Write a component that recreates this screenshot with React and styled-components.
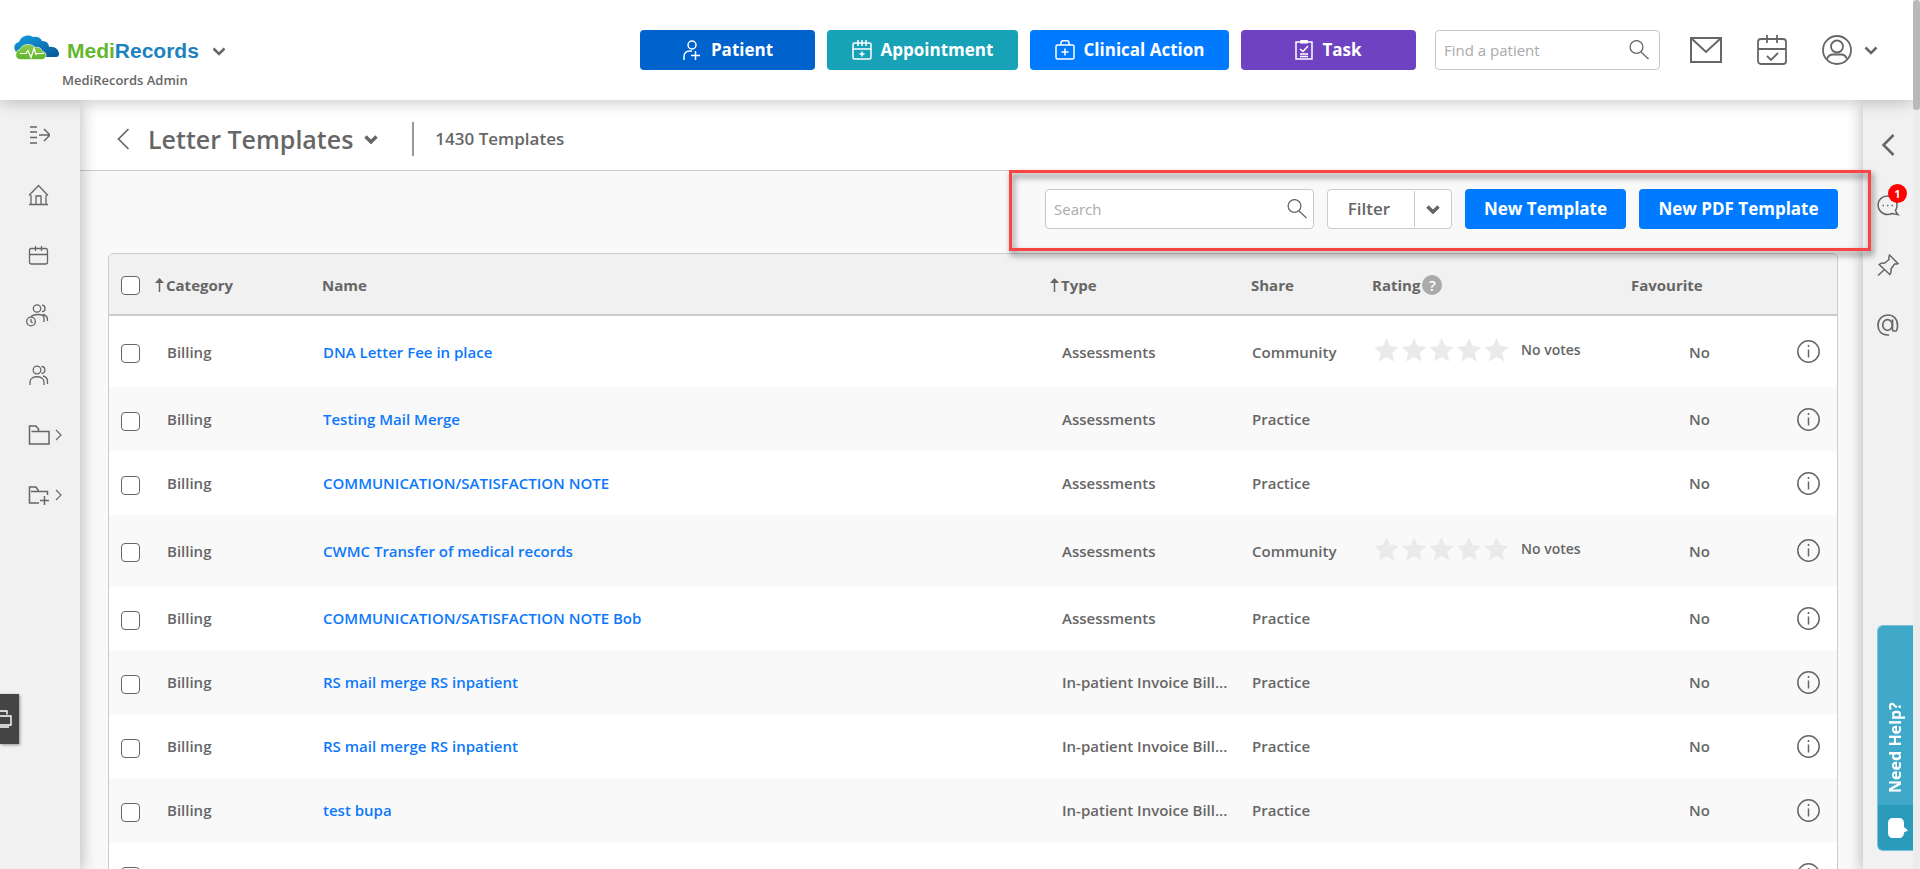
import React from "react";
import styled, { createGlobalStyle } from "styled-components";

const Global = createGlobalStyle`
  *, *::before, *::after { box-sizing: border-box; }
  body { margin: 0; background: #f9f9f9; color: #666; font: 600 15px/20px "Open Sans", "Noto Sans", sans-serif; }
  button, input { font: inherit; color: inherit; margin: 0; }
  button { border: 0; padding: 0; background: none; cursor: pointer; }
  a { color: inherit; text-decoration: none; }
  svg { display: block; flex: none; }
`;

const Page = styled.div`
  display: flex;
  flex-direction: column;
  height: 100vh;
  padding-right: 7px;
  overflow: hidden;
`;

const Header = styled.header`
  position: relative;
  z-index: 20;
  display: flex;
  align-items: center;
  flex: none;
  height: 100px;
  padding: 0 35px 0 14px;
  background: #fff;
  box-shadow: 0 1px 16px rgba(0, 0, 0, 0.25);
`;
const Brand = styled.div`
  display: flex;
  flex-direction: column;
  gap: 2px;
  margin-right: auto;
  padding-top: 24px;
`;
const BrandButton = styled.button`
  display: flex;
  align-items: center;
  gap: 8px;
`;
const Wordmark = styled.span`
  margin-right: 5px;
  color: #1c82bd;
  font: 700 21px/28px "Liberation Sans", Arial, sans-serif;
  span { color: #64b62d; }
`;
const Account = styled.span`
  padding-left: 48px;
  font-size: 13px;
  line-height: 20px;
`;
const Actions = styled.nav`
  display: flex;
  gap: 12px;
  margin-right: 19px;
`;
const Button = styled.button`
  display: flex;
  align-items: center;
  justify-content: center;
  gap: 9px;
  width: ${(p) => p.$w}px;
  height: 40px;
  border-radius: 4px;
  background: ${(p) => p.$bg || "#007bff"};
  color: #fff;
  font-size: 17px;
  font-weight: 700;
`;
const SearchBox = styled.label`
  display: flex;
  align-items: center;
  width: ${(p) => p.$w}px;
  height: 40px;
  padding: 0 ${(p) => p.$end}px 0 8px;
  border: 1px solid #c8c8c8;
  border-radius: 4px;
  background: #fff;
  input {
    flex: 1;
    min-width: 0;
    border: 0;
    padding: 0;
    outline: 0;
    background: none;
    font-size: 15px;
    font-weight: 400;
  }
  input::placeholder { color: #aaa; opacity: 1; }
`;
const HeaderIcons = styled.div`
  display: flex;
  align-items: center;
  gap: 35px;
  margin-left: 30px;
  button { display: flex; align-items: center; gap: 12px; }
`;

const Body = styled.div`
  display: flex;
  flex: 1;
  min-height: 0;
`;
const SideNav = styled.nav`
  position: relative;
  z-index: 10;
  flex: none;
  width: 80px;
  padding-top: 5px;
  background: #f1f1f1;
  box-shadow: 0 4px 16px rgba(0, 0, 0, 0.3);
`;
const NavItem = styled.a`
  display: flex;
  align-items: center;
  gap: 5px;
  height: 60px;
  padding-left: 26px;
`;
const Rail = styled.aside`
  position: relative;
  z-index: 10;
  flex: none;
  display: flex;
  flex-direction: column;
  width: 50px;
  padding: 15px 0 0 13px;
  background: #f1f1f1;
  box-shadow: 0 4px 16px rgba(0, 0, 0, 0.3);
`;
const RailButton = styled.button`
  position: relative;
  display: flex;
  align-items: center;
  justify-content: center;
  width: 24px;
  height: 60px;
`;
const Badge = styled.span`
  position: absolute;
  top: 9px;
  right: -7px;
  width: 19px;
  height: 19px;
  border-radius: 50%;
  background: #f00;
  color: #fff;
  font-size: 11px;
  line-height: 19px;
  font-weight: 700;
  text-align: center;
`;

const Main = styled.main`
  flex: 1;
  min-width: 0;
`;
const TitleBar = styled.div`
  display: flex;
  align-items: center;
  height: 71px;
  padding: 8px 0 0 36px;
  border-bottom: 1px solid #ccc;
  background: #fff;
`;
const Title = styled.h1`
  margin: 0 0 0 18px;
  font-size: 25px;
  line-height: 36px;
  font-weight: 600;
`;
const TitleMenu = styled.button`
  margin-left: 11px;
`;
const Count = styled.span`
  margin-left: 34px;
  padding-left: 21px;
  border-left: 2px solid #999;
  font-size: 17px;
  line-height: 34px;
`;
const Toolbar = styled.div`
  display: flex;
  justify-content: flex-end;
  padding: 18px 25px 24px;
`;
const Controls = styled.div`
  position: relative;
  display: flex;
  gap: 13px;
`;
const Highlight = styled.div`
  position: absolute;
  z-index: 30;
  inset: -19px -33px -22px -36px;
  border: 3px solid #fa4343;
  filter: drop-shadow(2px 4px 3px rgba(0, 0, 0, 0.55));
  pointer-events: none;
`;
const Filter = styled.div`
  display: flex;
  align-items: center;
  width: 125px;
  height: 40px;
  border: 1px solid #ccc;
  border-radius: 4px;
  background: #fff;
  font-size: 17px;
  button:first-child { flex: 1; height: 36px; padding-right: 4px; border-right: 1px solid #ccc; }
  button:last-child { display: flex; justify-content: center; width: 36px; }
`;

const TableFrame = styled.div`
  margin: 0 25px 0 28px;
  border: 1px solid #ccc;
  border-radius: 5px 5px 0 0;
  overflow: hidden;
`;
const Table = styled.table`
  width: 100%;
  border-spacing: 0;
  table-layout: fixed;
`;
const Th = styled.th`
  width: ${(p) => (p.$w ? p.$w + "px" : "auto")};
  height: 62px;
  padding: 2px 0 0 ${(p) => (p.$sorted ? 0 : p.$check ? 12 : 11)}px;
  border-bottom: 2px solid #ccc;
  background: #f1f1f1;
  font-weight: 700;
  text-align: left;
  white-space: nowrap;
`;
const HeadLabel = styled.span`
  display: flex;
  align-items: center;
  gap: 2px;
`;
const Help = styled.span`
  width: 20px;
  height: 20px;
  border-radius: 50%;
  background: #aaa;
  color: #fff;
  font-size: 15px;
  font-weight: 600;
  text-align: center;
`;
const Row = styled.tr`
  height: ${(p) => (p.$rated ? 71 : 64)}px;
  background: ${(p) => (p.$alt ? "#f9f9f9" : "#fff")};
`;
const Td = styled.td`
  padding: 0 0 0 12px;
  text-align: ${(p) => p.$align || "left"};
  white-space: nowrap;
  svg { display: inline-block; vertical-align: middle; }
`;
const Check = styled.input`
  appearance: none;
  display: block;
  width: 19px;
  height: 19px;
  border: 1px solid #666;
  border-radius: 4px;
  background: #fff;
  td & { position: relative; top: 2px; }
`;
const NameLink = styled.a`
  color: #0d78fb;
`;
const Rating = styled.span`
  display: flex;
  align-items: center;
  gap: 11px;
  padding: 0 0 4px 1px;
  font-size: 14px;
`;

const HelpTab = styled.a`
  position: fixed;
  z-index: 30;
  right: 7px;
  bottom: 18px;
  display: flex;
  flex-direction: column;
  width: 36px;
  height: 226px;
  border: 1px solid #7cc3d8;
  border-right: 0;
  border-radius: 6px 0 0 6px;
  background: #40a9c9;
  overflow: hidden;
`;
const HelpText = styled.span`
  flex: 1;
  padding-top: 12px;
  color: #fff;
  font: 700 16px/34px "Noto Sans", sans-serif;
  writing-mode: vertical-rl;
  transform: rotate(180deg);
`;
const HelpChat = styled.span`
  display: flex;
  align-items: center;
  justify-content: center;
  height: 45px;
  padding-left: 4px;
  background: #2b9bbb;
`;
const PrintTab = styled.button`
  position: fixed;
  z-index: 30;
  left: 0;
  bottom: 125px;
  width: 19px;
  height: 50px;
  background: #444;
  box-shadow: 1px 1px 3px rgba(0, 0, 0, 0.4);
`;
const ScrollTrack = styled.div`
  position: fixed;
  z-index: 40;
  top: 0;
  right: 0;
  bottom: 0;
  width: 7px;
  background: #ececec;
`;
const ScrollThumb = styled.div`
  height: 110px;
  border-radius: 4px;
  background: #b9b9b9;
`;

const Icon = ({ w = 24, h = w, sw = 1.5, color = "currentColor", vb, children }) => (
  <svg width={w} height={h} viewBox={vb || `0 0 ${w} ${h}`} fill="none" stroke={color} strokeWidth={sw} aria-hidden="true">
    {children}
  </svg>
);

const Chevron = ({ sw = 3 }) => (
  <Icon w={14} h={9} sw={sw}><path d="M1.5 1.5 7 7l5.5-5.5" /></Icon>
);
const Magnifier = () => (
  <Icon w={20} h={20} sw={1.3}><circle cx="7.5" cy="7" r="6.4" /><path d="m12 12 7.500 7" /></Icon>
);
const Logo = () => (
  <svg width="45" height="33" viewBox="0 0 45 33" aria-hidden="true">
    <defs>
      <linearGradient id="blue" x1="0" x2="1" y1="0" y2="1">
        <stop offset="0" stopColor="#12a0e0" />
        <stop offset="1" stopColor="#0b5596" />
      </linearGradient>
      <linearGradient id="green" x1="0" x2="0" y1="0" y2="1">
        <stop offset="0" stopColor="#8fce4b" />
        <stop offset="1" stopColor="#5fb32b" />
      </linearGradient>
    </defs>
    <path fill="url(#blue)" d="M2 17C-1 13 0 8 5 7 7 1 14-1 19 2c4-1 8 1 9 4 4 0 7 2 7 6 6-1 10 3 10 7 0 2-1 3-3 3H28z" />
    <path fill="url(#green)" stroke="#fff" strokeWidth="0.6" d="M7 24.500c-4 0-6-3-5-6 0-2 2-4 4-4 1-3 4-5 8-5 3 0 6 1 7 3 4-1 7 1 7 4 3 0 4 2 4 4s-2 4-4 4z" />
    <path fill="none" stroke="#fff" strokeWidth="1.2" d="M6 18.500h6l2-3 3 7 3-9 2 6 1-1h7" />
  </svg>
);
const PatientIcon = () => (
  <Icon w={20} h={20}><circle cx="10" cy="5" r="4" /><path d="M2 20v-3c0-4 2.500-6 6-6h2M13.500 11v9M9 15.500h9" /></Icon>
);
const AppointmentIcon = () => (
  <Icon w={20} h={20}><rect x="1" y="3" width="18" height="16" rx="1.500" /><path d="M1 9h18M6 0v6M10 0v6M14 0v6M10 11.500v5M7.500 14h5" /></Icon>
);
const ClinicalIcon = () => (
  <Icon w={20} h={20}><rect x="1" y="5" width="18" height="14" rx="1.500" /><path d="M6 5V3c0-1.500 1-2.200 2-2.200h4c1 0 2 .7 2 2.200v2M10 8.500v7M6.500 12h7" /></Icon>
);
const TaskIcon = () => (
  <Icon w={18} h={20}><path d="M1 2h16v17H1zM6 .8h6v2H6zM5 9l3 2.500L13 6M5 14h8M5 16.500h8" /></Icon>
);
const MailIcon = () => (
  <Icon w={32} h={26} sw={2}><path d="M1 1h30v24H1zM1 1l15 14L31 1" /></Icon>
);
const CalendarCheckIcon = () => (
  <Icon w={30} h={30} sw={1.8}><rect x="1" y="4" width="28" height="25" rx="3" /><path d="M1 14h28M10 0v8M20 0v8M10 21l4 4 7-7" /></Icon>
);
const UserIcon = () => (
  <Icon w={30} h={30} sw={1.8}><circle cx="15" cy="15" r="14" /><circle cx="15" cy="11.500" r="6" /><path d="M5 24c1-3 3-4.500 6-4.500h8c3 0 5 1.500 6 4.500" /></Icon>
);
const InfoIcon = () => (
  <Icon w={23} h={23} sw={1.5}><circle cx="11.500" cy="11.500" r="10.700" /><path d="M11.500 9.500v8M11.500 5v2" /></Icon>
);
const SortArrow = () => (
  <Icon w={9} h={14} sw={1.5}><path d="M4.500 14V2" /><path d="M4.500 0 9 5H0z" fill="currentColor" stroke="none" /></Icon>
);
const Stars = () => (
  <Icon w={136} h={24} color="none">
    {[0, 1, 2, 3, 4].map((i) => (
      <path key={i} fill="#eaeaea" transform={`translate(${i * 27.5} 0)`} d="m12.500 0 3.600 8 8.700.9-6.500 5.900 1.900 8.700-7.700-4.500-7.600 4.500 1.800-8.700L.2 8.900 9 8z" />
    ))}
  </Icon>
);

const MenuIcon = () => (
  <Icon><path d="M4 4h7M4 9h7M4 14.500h7M4 20h7M13 12h10M18 6l6 6-6 6" /></Icon>
);
const HomeIcon = () => (
  <Icon sw={1.3}><path d="M3 21.500h19M5 21v-9M20 21v-9M3 12.500l9.500-10 9.500 10M10 21v-8h5v8" /></Icon>
);
const CalendarIcon = () => (
  <Icon sw={1.3}><rect x="3.500" y="5.500" width="18" height="15.500" rx="2" /><path d="M3.500 11.500h18M9.500 3v5M15.500 3v5" /></Icon>
);
const WaitingIcon = () => (
  <Icon sw={1.3}><circle cx="11" cy="5.500" r="3.700" /><path d="M16 2.200c4 .2 4 6.300 0 6.500M5 14c2-3 13-4 13 1v4M17 11.500c3 .5 4.500 2 4.500 5.500v1" /><circle cx="5" cy="18.500" r="4.300" /><path d="M5 16V18.500l1.500 1.500" /></Icon>
);
const PeopleIcon = () => (
  <Icon sw={1.3}><circle cx="11" cy="7" r="3.800" /><path d="M15.500 3.500c4.500.2 4.500 6.700 0 7M4 22v-3c0-7 14-7 14 0v3M17 13c3 .5 4.500 2 4.500 5.500V21" /></Icon>
);
const FolderIcon = () => (
  <Icon><path d="M5.500 8.500H23V21H3.500V3H10l2.500 3v2" /></Icon>
);
const FolderPlusIcon = () => (
  <Icon><path d="M5 8.500h16.500V12M13 20H3.500V4H10l2 3v1.500M18.500 13v9M14 17.500h9" /></Icon>
);
const SmallChevron = () => (
  <Icon w={7} h={12} sw={1.1}><path d="m1 1 5 5-5 5" /></Icon>
);
const BackIcon = ({ sw = 1.7 }) => (
  <Icon w={14} h={22} sw={sw}><path d="M12.500 1 2.500 11l10 10" /></Icon>
);
const ChatIcon = () => (
  <Icon sw={1.5}><path d="M19.500 17.500c3.500-6 .5-14.500-8-14.500-5.500 0-9.500 4-9.500 9s4 9.500 9.500 9.500c2 0 3.500-.5 4.500-1l6 1.200c-1.500-1.500-2-2.700-2.500-4.200z" /><path d="M6.500 12.500H8M11 12.500h1.500M15.500 12.500H17" /></Icon>
);
const PinIcon = () => (
  <Icon sw={1.5}><path d="m13.500 2 8.500 8.500c-1.500.8-2.500.7-3.500.5L15 16c.5 2.500.2 4-1.200 5.500L3.200 11.500C5 10 6.500 9.800 8.500 10.300L13 6.500c-.3-1.700-.2-3 .5-4.500zM8.500 16.500l-6.500 6" /></Icon>
);
const AtIcon = () => (
  <Icon sw={1.7}><ellipse cx="11.500" cy="12" rx="4.800" ry="5.300" /><path d="M16.500 6.500V17c0 1 .7 1 1.500 1h1.500c1.500 0 2-3 2-6 0-6-4-10-9.500-10S2 6 2 12s3.500 10 9.500 10h1.500" /></Icon>
);
const ChatBubble = () => (
  <svg width="20" height="20" viewBox="0 0 20 20" fill="#fff" aria-hidden="true"><path d="M5 0h6c3 0 5 2 5 5v4l4 3.500-4 2c0 3.500-2 5.500-5 5.500H5c-3 0-5-2-5-5V5c0-3 2-5 5-5z" /></svg>
);
const PrintIcon = () => (
  <Icon w={19} h={50} sw={1.4} color="#fff"><path d="M0 17h7v3.500M0 22h11v9H0M0 33h9" /></Icon>
);

const actions = [
  { label: "Patient", w: 175, bg: "#0062cc", icon: <PatientIcon /> },
  { label: "Appointment", w: 191, bg: "#17a2b8", icon: <AppointmentIcon /> },
  { label: "Clinical Action", w: 199, bg: "#007bff", icon: <ClinicalIcon /> },
  { label: "Task", w: 175, bg: "#6f42c1", icon: <TaskIcon /> },
];
const nav = [
  { label: "Expand menu", icon: <MenuIcon /> },
  { label: "Home", icon: <HomeIcon /> },
  { label: "Calendar", icon: <CalendarIcon /> },
  { label: "Waiting room", icon: <WaitingIcon /> },
  { label: "Patients", icon: <PeopleIcon /> },
  { label: "Folders", icon: <FolderIcon />, more: true },
  { label: "Add folder", icon: <FolderPlusIcon />, more: true },
];
const rows = [
  { name: "DNA Letter Fee in place", type: "Assessments", share: "Community", rated: true },
  { name: "Testing Mail Merge", type: "Assessments", share: "Practice" },
  { name: "COMMUNICATION/SATISFACTION NOTE", type: "Assessments", share: "Practice" },
  { name: "CWMC Transfer of medical records", type: "Assessments", share: "Community", rated: true },
  { name: "COMMUNICATION/SATISFACTION NOTE Bob", type: "Assessments", share: "Practice" },
  { name: "RS mail merge RS inpatient", type: "In-patient Invoice Bill...", share: "Practice" },
  { name: "RS mail merge RS inpatient", type: "In-patient Invoice Bill...", share: "Practice" },
  { name: "test bupa", type: "In-patient Invoice Bill...", share: "Practice" },
  { name: "Copy of Tax Record", type: "In-patient Invoice Bill...", share: "Practice" },
];

export default function App() {
  return (
    <Page>
      <Global />
      <Header>
        <Brand>
          <BrandButton>
            <Logo />
            <Wordmark><span>Medi</span>Records</Wordmark>
            <Chevron sw={2.5} />
          </BrandButton>
          <Account>MediRecords Admin</Account>
        </Brand>
        <Actions>
          {actions.map((a) => (
            <Button key={a.label} $w={a.w} $bg={a.bg}>{a.icon}{a.label}</Button>
          ))}
        </Actions>
        <SearchBox $w={225} $end={10}>
          <input type="text" placeholder="Find a patient" aria-label="Find a patient" />
          <Magnifier />
        </SearchBox>
        <HeaderIcons>
          <button aria-label="Messages"><MailIcon /></button>
          <button aria-label="Tasks due"><CalendarCheckIcon /></button>
          <button aria-label="Account"><UserIcon /><Chevron sw={2.5} /></button>
        </HeaderIcons>
      </Header>
      <Body>
        <SideNav>
          {nav.map((n) => (
            <NavItem key={n.label} href="#" aria-label={n.label}>{n.icon}{n.more && <SmallChevron />}</NavItem>
          ))}
        </SideNav>
        <Main>
          <TitleBar>
            <button aria-label="Back"><BackIcon /></button>
            <Title>Letter Templates</Title>
            <TitleMenu aria-label="Choose template kind"><Chevron sw={3.5} /></TitleMenu>
            <Count>1430 Templates</Count>
          </TitleBar>
          <Toolbar>
            <Controls>
              <SearchBox $w={269} $end={6}>
                <input type="text" placeholder="Search" aria-label="Search" />
                <Magnifier />
              </SearchBox>
              <Filter>
                <button>Filter</button>
                <button aria-label="Filter options"><Chevron sw={3.5} /></button>
              </Filter>
              <Button $w={161}>New Template</Button>
              <Button $w={199}>New PDF Template</Button>
              <Highlight />
            </Controls>
          </Toolbar>
          <TableFrame>
            <Table>
              <thead>
                <tr>
                  <Th $w={46} $check><Check type="checkbox" aria-label="Select all" /></Th>
                  <Th $w={156} $sorted><HeadLabel><SortArrow />Category</HeadLabel></Th>
                  <Th>Name</Th>
                  <Th $w={190} $sorted><HeadLabel><SortArrow />Type</HeadLabel></Th>
                  <Th $w={121}>Share</Th>
                  <Th $w={259}><HeadLabel>Rating<Help>?</Help></HeadLabel></Th>
                  <Th $w={147}>Favourite</Th>
                  <Th $w={70} aria-label="Details" />
                </tr>
              </thead>
              <tbody>
                {rows.map((r, i) => (
                  <Row key={i} $rated={r.rated} $alt={i % 2 === 1}>
                    <Td><Check type="checkbox" aria-label={"Select " + r.name} /></Td>
                    <Td>Billing</Td>
                    <Td><NameLink href="#">{r.name}</NameLink></Td>
                    <Td>{r.type}</Td>
                    <Td>{r.share}</Td>
                    <Td>{r.rated && <Rating><Stars />No votes</Rating>}</Td>
                    <Td $align="center">No</Td>
                    <Td $align="center"><button aria-label="Details"><InfoIcon /></button></Td>
                  </Row>
                ))}
              </tbody>
            </Table>
          </TableFrame>
        </Main>
        <Rail>
          <RailButton aria-label="Open panel"><BackIcon sw={2.5} /></RailButton>
          <RailButton aria-label="Chats"><ChatIcon /><Badge>1</Badge></RailButton>
          <RailButton aria-label="Pinned"><PinIcon /></RailButton>
          <RailButton aria-label="Mentions"><AtIcon /></RailButton>
        </Rail>
      </Body>
      <PrintTab aria-label="Print"><PrintIcon /></PrintTab>
      <HelpTab href="#">
        <HelpText>Need Help?</HelpText>
        <HelpChat><ChatBubble /></HelpChat>
      </HelpTab>
      <ScrollTrack><ScrollThumb /></ScrollTrack>
    </Page>
  );
}
